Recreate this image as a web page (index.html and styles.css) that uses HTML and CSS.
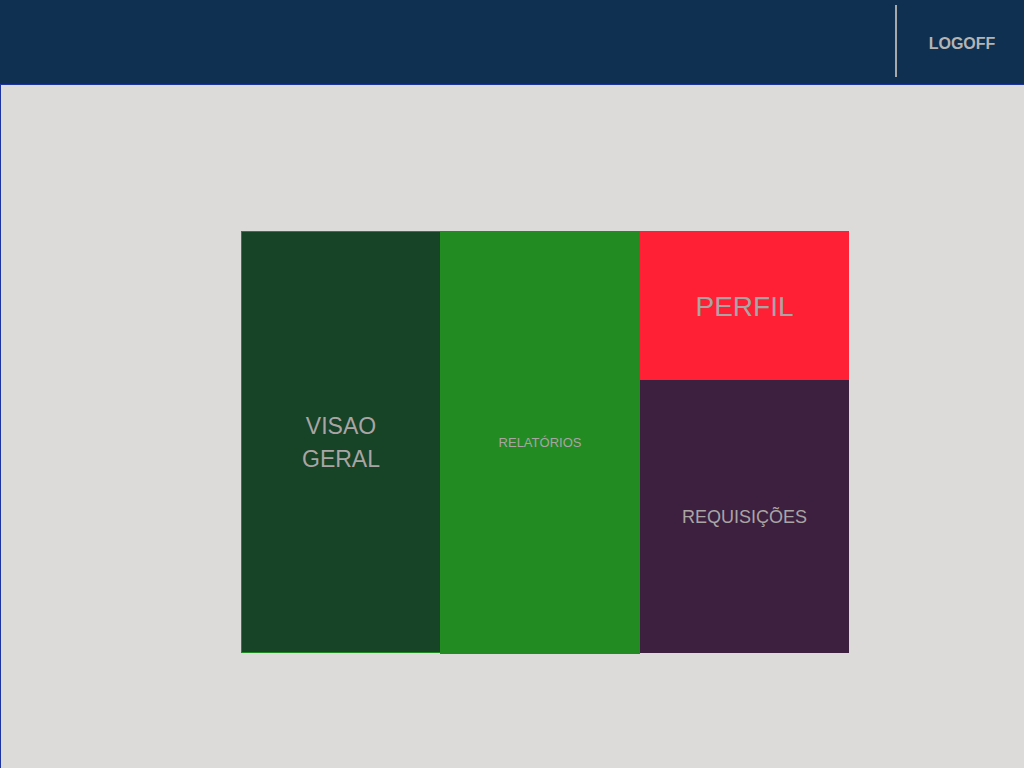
FILE: index.html
```html
<!DOCTYPE html>
<html lang="pt">
<head>
<meta charset="utf-8">
<title>Painel</title>
<link rel="stylesheet" href="styles.css">
</head>
<body>
<header class="topbar">
  <div class="divider"></div>
  <a class="logoff" href="#">LOGOFF</a>
</header>
<main class="main">
  <div class="tiles">
    <div class="tile tile-visao">VISAO<br>GERAL</div>
    <div class="tile tile-rel">RELATÓRIOS</div>
    <div class="tile tile-perfil">PERFIL</div>
    <div class="tile tile-req">REQUISIÇÕES</div>
  </div>
</main>
</body>
</html>
```
FILE: styles.css
```css
html, body {
  margin: 0;
  padding: 0;
  height: 100%;
}
body {
  font-family: "Liberation Sans", Arial, sans-serif;
  background: #dcdbd9;
  display: flex;
  flex-direction: column;
}
.topbar {
  height: 84px;
  background: #0f3050;
  display: flex;
  align-items: flex-start;
  justify-content: flex-end;
  flex-shrink: 0;
}
.divider {
  width: 2px;
  height: 72px;
  margin-top: 5px;
  background: #a8a8a8;
}
.logoff {
  width: 127px;
  height: 84px;
  display: flex;
  align-items: center;
  justify-content: center;
  color: #b4b4b4;
  font-weight: bold;
  font-size: 16px;
  text-decoration: none;
  padding-left: 3px;
  padding-top: 3px;
  box-sizing: border-box;
}
.main {
  flex: 1;
  border-top: 1px solid #1e35a0;
  border-left: 1px solid #1e35a0;
  padding: 146px 0 0 240px;
}
.tiles {
  display: grid;
  grid-template-columns: 199px 200px 209px;
  grid-template-rows: 149px 273px;
  width: 608px;
}
.tile {
  display: flex;
  align-items: center;
  justify-content: center;
  text-align: center;
  color: #aaa5a5;
}
.tile-visao {
  grid-row: 1 / 3;
  background: #174327;
  border: 1px solid #1f8a22;
  border-right: none;
  font-size: 23px;
  line-height: 33px;
  padding-top: 1px;
}
.tile-rel {
  grid-row: 1 / 3;
  background: #228b22;
  font-size: 13px;
  height: 423px;
}
.tile-perfil {
  background: #ff2035;
  font-size: 28px;
  padding-top: 3px;
}
.tile-req {
  background: #3d2040;
  font-size: 18px;
  padding-top: 1px;
}
```
